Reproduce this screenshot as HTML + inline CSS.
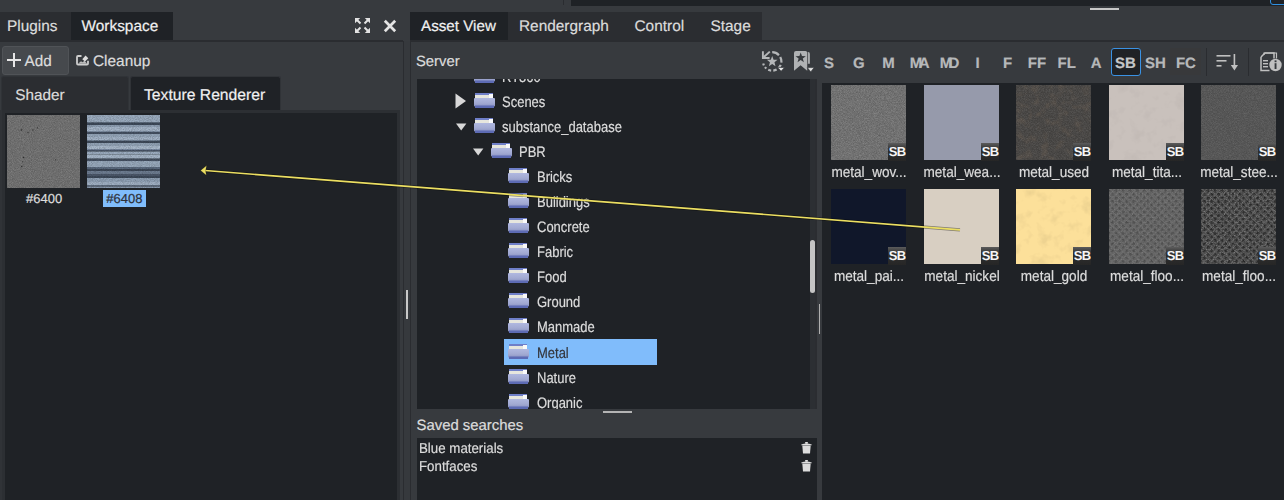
<!DOCTYPE html>
<html><head><meta charset="utf-8">
<style>
*{margin:0;padding:0;box-sizing:border-box}
html,body{width:1284px;height:500px;overflow:hidden;text-rendering:geometricPrecision;background:#373a3e;font-family:"Liberation Sans",sans-serif;color:#dcdcdc}
.a{position:absolute}
.t{position:absolute;white-space:nowrap;line-height:1;-webkit-text-stroke:0.2px currentColor}
</style></head><body>
<svg width="0" height="0" style="position:absolute">
<defs>
<linearGradient id="fg" x1="0" y1="0" x2="0" y2="1">
<stop offset="0" stop-color="#b0b8e0"/><stop offset="0.6" stop-color="#a2aad2"/><stop offset="1" stop-color="#8c94c4"/>
</linearGradient>
<symbol id="folder" viewBox="0 0 21 15">
<rect x="1" y="0" width="18" height="2.2" fill="#6f7fc8"/>
<rect x="1" y="2" width="18" height="3.5" fill="#e6e6de"/>
<rect x="15" y="1" width="4" height="4.5" fill="#fafafa"/>
<rect x="0" y="5" width="21" height="8.5" rx="1" fill="url(#fg)"/>
<rect x="1" y="12.5" width="19" height="2.5" fill="#5d6bb4"/>
</symbol>
</defs></svg>

<div class="a" style="left:563px;top:0px;width:1px;height:5px;background:#2a2c30;"></div>
<div class="a" style="left:571px;top:0px;width:713px;height:5.5px;background:#1f2226;"></div>
<div class="a" style="left:1270px;top:-4px;width:24px;height:8.5px;border:1.6px solid #2f8fe0;border-radius:3px"></div>
<div class="a" style="left:1090px;top:8px;width:29px;height:2px;background:#c8c8c8;"></div>
<div class="a" style="left:0px;top:12px;width:71px;height:28px;background:#2b2d31;"></div>
<div class="t" style="left:7.00px;top:19.00px;font-size:15.40px;color:#dcdcdc;">Plugins</div>
<div class="a" style="left:71px;top:12px;width:102px;height:28px;background:#1f2226;"></div>
<div class="t" style="left:81.50px;top:19.00px;font-size:15.40px;color:#f0f0f0;">Workspace</div>
<svg class="a" style="left:354px;top:17px" width="17" height="17" viewBox="0 0 17 17">
<g stroke="#e2e2e2" stroke-width="2" fill="none"><path d="M2.5 2.5 L6.5 6.5 M14.5 2.5 L10.5 6.5 M2.5 14.5 L6.5 10.5 M14.5 14.5 L10.5 10.5"/></g>
<g fill="#e2e2e2"><path d="M1 1 H6.2 L1 6.2Z M16 1 H10.8 L16 6.2Z M1 16 H6.2 L1 10.8Z M16 16 H10.8 L16 10.8Z"/></g>
</svg>
<svg class="a" style="left:383px;top:19px" width="14" height="14" viewBox="0 0 14 14">
<path d="M1.8 1.8 L12.2 12.2 M12.2 1.8 L1.8 12.2" stroke="#e4e4e4" stroke-width="2.7"/></svg>
<div class="a" style="left:0px;top:40px;width:403px;height:2px;background:#2a2c30;"></div>
<div class="a" style="left:403px;top:41px;width:1px;height:459px;background:#2a2c30;"></div>
<div class="a" style="left:404px;top:41px;width:6px;height:459px;background:#36393d;"></div>
<div class="a" style="left:410px;top:41px;width:1px;height:459px;background:#2a2c30;"></div>
<div class="a" style="left:1.5px;top:46px;width:67px;height:28.5px;background:#46494d;border:1px solid #505357;border-radius:3px"></div>
<div class="a" style="left:7px;top:59px;width:14px;height:2px;background:#e6e6e6;"></div>
<div class="a" style="left:13px;top:53px;width:2px;height:14px;background:#e6e6e6;"></div>
<div class="t" style="left:24.50px;top:54.00px;font-size:15.30px;color:#dcdcdc;">Add</div>
<svg class="a" style="left:75px;top:54px" width="15" height="12" viewBox="0 0 15 12">
<path d="M6.5 2 H3 Q2 2 2 3 V9.6 Q2 10.6 3 10.6 H12 Q13 10.6 13 9.6 V6.8" fill="none" stroke="#cdcdcd" stroke-width="1.8"/>
<path d="M3 9.8 L6 7.2 L7.5 8.2 L9.5 6.8 L12.2 9.8Z" fill="#bdbdbd"/>
<path d="M7.3 5.2 L10.6 1.6 L13.3 4.3 L10 7.6Z" fill="#dedede"/>
</svg>
<div class="t" style="left:93.00px;top:54.00px;font-size:15.40px;color:#dcdcdc;">Cleanup</div>
<div class="a" style="left:1px;top:76px;width:128px;height:35px;background:#2b2d31;border:1px solid #303337;border-bottom:none;border-radius:3px 3px 0 0"></div>
<div class="t" style="left:15.30px;top:88.00px;font-size:15.30px;color:#dcdcdc;">Shader</div>
<div class="a" style="left:130px;top:76px;width:151px;height:36px;background:#1f2226;border:1px solid #303337;border-bottom:none;border-radius:3px 3px 0 0"></div>
<div class="t" style="left:144.00px;top:88.00px;font-size:15.70px;color:#f0f0f0;">Texture Renderer</div>
<div class="a" style="left:0px;top:110px;width:400px;height:390px;background:#1f2226;border:3px solid #2c2f33;border-left-width:5px;border-bottom:none"></div>
<div class="a" style="left:0px;top:110px;width:2px;height:390px;background:#303337;"></div>
<svg class="a" style="left:7px;top:115px" width="73" height="73">
<defs><filter id="n1" x="0" y="0" width="100%" height="100%"><feTurbulence type="fractalNoise" baseFrequency="1.1" numOctaves="2" seed="5"/>
<feColorMatrix type="matrix" values="0 0 0 0 0  0 0 0 0 0  0 0 0 0 0  -1.5 0 0 0 1.0"/></filter>
<filter id="n1b" x="0" y="0" width="100%" height="100%"><feTurbulence type="fractalNoise" baseFrequency="1.1" numOctaves="2" seed="9"/>
<feColorMatrix type="matrix" values="0 0 0 0 1  0 0 0 0 1  0 0 0 0 1  1.5 0 0 0 -0.5"/></filter></defs>
<rect width="73" height="73" fill="#6c6c6c"/><rect width="73" height="73" filter="url(#n1)" opacity="0.18"/><rect width="73" height="73" filter="url(#n1b)" opacity="0.18"/>
<g fill="#2e2e2e"><circle cx="14.4" cy="15" r="0.8"/><circle cx="21" cy="17.6" r="0.7"/><circle cx="25.9" cy="15" r="0.7"/><circle cx="30.4" cy="12.8" r="0.6"/><circle cx="16.6" cy="42.4" r="0.7"/><circle cx="14.7" cy="51.5" r="0.7"/><circle cx="48.6" cy="44.8" r="0.6"/><circle cx="15.5" cy="46.7" r="0.5"/></g>
</svg>
<svg class="a" style="left:87px;top:115px" width="73" height="73"><rect y="0" width="73" height="7" fill="#9aabbe"/><rect y="7" width="73" height="1" fill="#5d6b7c"/><rect y="8" width="73" height="2" fill="#3e4a5a"/><rect y="10" width="73" height="2" fill="#8e9fb3"/><rect y="12" width="73" height="4" fill="#a4b4c7"/><rect y="16" width="73" height="1" fill="#7d8da1"/><rect y="17" width="73" height="2" fill="#455162"/><rect y="19" width="73" height="3" fill="#95a6b9"/><rect y="22" width="73" height="3" fill="#a2b2c5"/><rect y="25" width="73" height="1" fill="#707f92"/><rect y="26" width="73" height="2" fill="#3f4b5b"/><rect y="28" width="73" height="3" fill="#92a3b6"/><rect y="31" width="73" height="3" fill="#a8b8ca"/><rect y="34" width="73" height="1" fill="#7888a0"/><rect y="35" width="73" height="1.5" fill="#4a5668"/><rect y="36.5" width="73" height="3" fill="#9cadc0"/><rect y="39.5" width="73" height="4" fill="#a6b6c8"/><rect y="43.5" width="73" height="1" fill="#6f7e92"/><rect y="44.5" width="73" height="1.5" fill="#465264"/><rect y="46" width="73" height="6" fill="#98a9bc"/><rect y="52" width="73" height="2" fill="#5b6a7e"/><rect y="54" width="73" height="2" fill="#3d4858"/><rect y="56" width="73" height="3" fill="#6d7c90"/><rect y="59" width="73" height="2" fill="#4c586a"/><rect y="61" width="73" height="2" fill="#3e4a5a"/><rect y="63" width="73" height="4" fill="#8fa0b4"/><rect y="67" width="73" height="3" fill="#a0b0c3"/><rect y="70" width="73" height="1.5" fill="#5e6c7e"/><rect y="71.5" width="73" height="1.5" fill="#8898ac"/><rect width="73" height="73" filter="url(#n1)" opacity="0.25"/></svg>
<div class="t" style="left:26.00px;top:192.00px;font-size:13.00px;color:#dcdcdc;">#6400</div>
<div class="a" style="left:103px;top:190px;width:43px;height:17px;background:#80bdfb;"></div>
<div class="t" style="left:106.30px;top:192.00px;font-size:13.00px;color:#2e3138;">#6408</div>
<div class="a" style="left:406px;top:290px;width:2px;height:29px;background:#c8c8c8;"></div>
<div class="a" style="left:410px;top:12px;width:98px;height:28px;background:#1f2226;"></div>
<div class="t" style="left:421.00px;top:19.00px;font-size:15.20px;color:#f0f0f0;">Asset View</div>
<div class="a" style="left:508px;top:12px;width:254px;height:28px;background:#2b2d31;"></div>
<div class="t" style="left:519.00px;top:19.00px;font-size:15.40px;color:#dcdcdc;">Rendergraph</div>
<div class="t" style="left:634.50px;top:19.00px;font-size:15.40px;color:#dcdcdc;">Control</div>
<div class="t" style="left:710.50px;top:19.00px;font-size:15.40px;color:#dcdcdc;">Stage</div>
<div class="a" style="left:410px;top:40px;width:874px;height:2px;background:#2a2c30;"></div>
<div class="t" style="left:416.00px;top:55.00px;font-size:14.80px;color:#dcdcdc;">Server</div>
<svg class="a" style="left:759px;top:48px" width="27" height="26" viewBox="0 0 27 26">
<path d="M13.2 4.2 A9.2 9.2 0 1 1 4 13.4" fill="none" stroke="#b4b6b8" stroke-width="2.2" stroke-dasharray="7.5 2.2 6 2.2 4 2.2 3.5 2.2 3 2.2 2 2 2 3"/>
<path d="M3.9 3.3 V10 H10.6" fill="none" stroke="#b4b6b8" stroke-width="1.9"/>
<path d="M4.6 9.3 L10.8 3.6" stroke="#b4b6b8" stroke-width="1.9"/>
<path d="M13.20 8.00 L14.61 11.66 L18.53 11.87 L15.48 14.34 L16.49 18.13 L13.20 16.00 L9.91 18.13 L10.92 14.34 L7.87 11.87 L11.79 11.66Z" fill="#b4b6b8"/>
<path d="M18.6 19.4 H25.6 L22.1 23.3Z" fill="#e2e2e2" stroke="#373a3e" stroke-width="0.7"/>
</svg>
<svg class="a" style="left:791px;top:48px" width="28" height="27" viewBox="0 0 28 27">
<path d="M3 5 Q3 3 5 3 H14.5 Q16.2 3 16.2 5 V22.7 L9.6 17.3 L3 22.7Z" fill="#b0b2b4"/>
<path d="M16.6 4 H17.2 Q18.9 4 18.9 6 V15.7 H16.6Z" fill="#a8aaac"/>
<rect x="16.2" y="4.5" width="0.7" height="11" fill="#55575a"/>
<path d="M9.70 4.40 L10.99 8.02 L14.84 8.13 L11.79 10.48 L12.87 14.17 L9.70 12.00 L6.53 14.17 L7.61 10.48 L4.56 8.13 L8.41 8.02Z" fill="#373a3e"/>
<path d="M16.3 19.6 H23.2 L19.75 23.9Z" fill="#e2e2e2" stroke="#373a3e" stroke-width="0.7"/>
</svg>
<div class="a" style="left:417px;top:78.5px;width:393px;height:330px;background:#1f2226;overflow:hidden">
<svg class="a" style="left:57.0px;top:-10.5px" width="21" height="15"><use href="#folder"/></svg>
<div class="t" style="left:85.00px;top:-8.50px;font-size:15.20px;color:#dcdcdc;transform:scaleX(0.855);transform-origin:0 0">RT360</div>
<svg class="a" style="left:38.0px;top:14.5px" width="12" height="16"><path d="M0.5 0.5 L11 8 L0.5 15.5Z" fill="#d8d8d8"/></svg>
<svg class="a" style="left:57.0px;top:14.5px" width="21" height="15"><use href="#folder"/></svg>
<div class="t" style="left:85.00px;top:16.50px;font-size:15.20px;color:#dcdcdc;transform:scaleX(0.855);transform-origin:0 0">Scenes</div>
<svg class="a" style="left:38.0px;top:44.1px" width="13" height="10"><path d="M1 0.6 L11.4 0.6 L6.2 7.6Z" fill="#d8d8d8"/></svg>
<svg class="a" style="left:57.0px;top:39.5px" width="21" height="15"><use href="#folder"/></svg>
<div class="t" style="left:85.00px;top:41.50px;font-size:15.20px;color:#dcdcdc;transform:scaleX(0.855);transform-origin:0 0">substance_database</div>
<svg class="a" style="left:55.0px;top:69.1px" width="13" height="10"><path d="M1 0.6 L11.4 0.6 L6.2 7.6Z" fill="#d8d8d8"/></svg>
<svg class="a" style="left:74.0px;top:64.5px" width="21" height="15"><use href="#folder"/></svg>
<div class="t" style="left:102.20px;top:66.50px;font-size:15.20px;color:#dcdcdc;transform:scaleX(0.855);transform-origin:0 0">PBR</div>
<svg class="a" style="left:91.0px;top:89.5px" width="21" height="15"><use href="#folder"/></svg>
<div class="t" style="left:119.80px;top:91.50px;font-size:15.20px;color:#dcdcdc;transform:scaleX(0.855);transform-origin:0 0">Bricks</div>
<svg class="a" style="left:91.0px;top:114.5px" width="21" height="15"><use href="#folder"/></svg>
<div class="t" style="left:119.80px;top:116.50px;font-size:15.20px;color:#dcdcdc;transform:scaleX(0.855);transform-origin:0 0">Buildings</div>
<svg class="a" style="left:91.0px;top:139.5px" width="21" height="15"><use href="#folder"/></svg>
<div class="t" style="left:119.80px;top:141.50px;font-size:15.20px;color:#dcdcdc;transform:scaleX(0.855);transform-origin:0 0">Concrete</div>
<svg class="a" style="left:91.0px;top:164.5px" width="21" height="15"><use href="#folder"/></svg>
<div class="t" style="left:119.80px;top:166.50px;font-size:15.20px;color:#dcdcdc;transform:scaleX(0.855);transform-origin:0 0">Fabric</div>
<svg class="a" style="left:91.0px;top:189.5px" width="21" height="15"><use href="#folder"/></svg>
<div class="t" style="left:119.80px;top:191.50px;font-size:15.20px;color:#dcdcdc;transform:scaleX(0.855);transform-origin:0 0">Food</div>
<svg class="a" style="left:91.0px;top:214.5px" width="21" height="15"><use href="#folder"/></svg>
<div class="t" style="left:119.80px;top:216.50px;font-size:15.20px;color:#dcdcdc;transform:scaleX(0.855);transform-origin:0 0">Ground</div>
<svg class="a" style="left:91.0px;top:239.5px" width="21" height="15"><use href="#folder"/></svg>
<div class="t" style="left:119.80px;top:241.50px;font-size:15.20px;color:#dcdcdc;transform:scaleX(0.855);transform-origin:0 0">Manmade</div>
<div class="a" style="left:87px;top:260.8px;width:153px;height:25.5px;background:#80bcfb;"></div>
<svg class="a" style="left:91.0px;top:265.0px" width="21" height="15"><use href="#folder"/></svg>
<div class="t" style="left:119.80px;top:267.50px;font-size:15.20px;color:#34373e;transform:scaleX(0.855);transform-origin:0 0">Metal</div>
<svg class="a" style="left:91.0px;top:290.0px" width="21" height="15"><use href="#folder"/></svg>
<div class="t" style="left:119.80px;top:292.50px;font-size:15.20px;color:#dcdcdc;transform:scaleX(0.855);transform-origin:0 0">Nature</div>
<svg class="a" style="left:91.0px;top:315.0px" width="21" height="15"><use href="#folder"/></svg>
<div class="t" style="left:119.80px;top:317.50px;font-size:15.20px;color:#dcdcdc;transform:scaleX(0.855);transform-origin:0 0">Organic</div>
</div>
<div class="a" style="left:809.5px;top:78.5px;width:5.5px;height:330px;background:#2c2f33;"></div>
<div class="a" style="left:809.5px;top:240px;width:5.8px;height:53px;background:#c4c4c4;border-radius:3px"></div>
<div class="a" style="left:815px;top:78.5px;width:2px;height:330px;background:#2b2d31;"></div>
<div class="a" style="left:603px;top:411px;width:29px;height:2px;background:#b4b4b4;"></div>
<div class="t" style="left:416.50px;top:419.00px;font-size:14.90px;color:#dcdcdc;">Saved searches</div>
<div class="a" style="left:417px;top:437.5px;width:399.5px;height:62.5px;background:#1f2226;"></div>
<div class="t" style="left:419.00px;top:442.00px;font-size:14.30px;color:#dcdcdc;transform:scaleX(0.930);transform-origin:0 0;">Blue materials</div>
<div class="t" style="left:419.00px;top:460.00px;font-size:14.30px;color:#dcdcdc;transform:scaleX(0.930);transform-origin:0 0;">Fontfaces</div>
<svg class="a" style="left:800.5px;top:441.5px" width="11" height="13" viewBox="0 0 11 13">
<path d="M0.3 2.6 Q5.5 0.6 10.7 2.6 V3.3 H0.3Z" fill="#e0e0e0"/><rect x="4" y="0" width="3" height="1.8" rx="0.8" fill="#e0e0e0"/>
<path d="M1.3 3.6 H9.7 L9 11.5 H2Z" fill="#dcdcdc"/></svg>
<svg class="a" style="left:800.5px;top:459.6px" width="11" height="13" viewBox="0 0 11 13">
<path d="M0.3 2.6 Q5.5 0.6 10.7 2.6 V3.3 H0.3Z" fill="#e0e0e0"/><rect x="4" y="0" width="3" height="1.8" rx="0.8" fill="#e0e0e0"/>
<path d="M1.3 3.6 H9.7 L9 11.5 H2Z" fill="#dcdcdc"/></svg>
<div class="a" style="left:818.5px;top:304px;width:1.2px;height:30px;background:#b0b0b0;"></div>
<div class="a" style="left:1170px;top:48px;width:31px;height:27px;background:#38393b;"></div>
<div class="a" style="left:1111px;top:48px;width:29.5px;height:27.5px;background:#1f2226;border:1.6px solid #3a92e4;border-radius:3px"></div>
<div class="t" style="left:799.0px;top:56.00px;width:60px;text-align:center;font-weight:bold;font-size:15px;color:#b6b8ba;">S</div>
<div class="t" style="left:828.8px;top:56.00px;width:60px;text-align:center;font-weight:bold;font-size:15px;color:#b6b8ba;">G</div>
<div class="t" style="left:858.4px;top:56.00px;width:60px;text-align:center;font-weight:bold;font-size:15px;color:#b6b8ba;">M</div>
<div class="t" style="left:887.9px;top:56.00px;width:60px;text-align:center;font-weight:bold;font-size:15px;color:#b6b8ba;letter-spacing:-3.5px;">MA</div>
<div class="t" style="left:917.8px;top:56.00px;width:60px;text-align:center;font-weight:bold;font-size:15px;color:#b6b8ba;letter-spacing:-3.5px;">MD</div>
<div class="t" style="left:947.6px;top:56.00px;width:60px;text-align:center;font-weight:bold;font-size:15px;color:#b6b8ba;">I</div>
<div class="t" style="left:977.6px;top:56.00px;width:60px;text-align:center;font-weight:bold;font-size:15px;color:#b6b8ba;">F</div>
<div class="t" style="left:1007.0px;top:56.00px;width:60px;text-align:center;font-weight:bold;font-size:15px;color:#b6b8ba;">FF</div>
<div class="t" style="left:1036.7px;top:56.00px;width:60px;text-align:center;font-weight:bold;font-size:15px;color:#b6b8ba;">FL</div>
<div class="t" style="left:1066.2px;top:56.00px;width:60px;text-align:center;font-weight:bold;font-size:15px;color:#b6b8ba;">A</div>
<div class="t" style="left:1095.5px;top:56.00px;width:60px;text-align:center;font-weight:bold;font-size:15px;color:#c4c6c8;">SB</div>
<div class="t" style="left:1125.4px;top:56.00px;width:60px;text-align:center;font-weight:bold;font-size:15px;color:#b6b8ba;">SH</div>
<div class="t" style="left:1155.9px;top:56.00px;width:60px;text-align:center;font-weight:bold;font-size:15px;color:#b6b8ba;">FC</div>
<div class="a" style="left:1206px;top:48px;width:1px;height:28px;background:#2a2c30;"></div>
<div class="a" style="left:1248px;top:48px;width:1px;height:28px;background:#2a2c30;"></div>
<svg class="a" style="left:1216px;top:54px" width="22" height="17" viewBox="0 0 22 17">
<g fill="#c0c0c0"><rect x="0.5" y="1" width="14" height="1.6"/><rect x="0.5" y="6" width="10" height="1.6"/><rect x="0.5" y="11" width="5" height="1.6"/>
<rect x="17.6" y="0" width="1.6" height="12"/><path d="M14.8 11 H22 L18.4 16.5Z"/></g></svg>
<svg class="a" style="left:1260px;top:52px" width="22" height="20" viewBox="0 0 22 20">
<path d="M1 5 L5 1 H14 V6.5" fill="none" stroke="#c0c0c0" stroke-width="1.5"/>
<path d="M1 5 V18.5 H9.5" fill="none" stroke="#c0c0c0" stroke-width="1.5"/>
<path d="M4 3 V1 H16.5 V6.5" fill="none" stroke="#c0c0c0" stroke-width="1.2"/>
<g fill="#c0c0c0"><rect x="3" y="8" width="5" height="1.4"/><rect x="3" y="11" width="5" height="1.4"/><rect x="3" y="14" width="5" height="1.4"/></g>
<circle cx="15.5" cy="13" r="6.2" fill="#c0c0c0"/>
<rect x="14.6" y="11.2" width="1.9" height="5.8" fill="#373a3e"/><rect x="14.6" y="8.4" width="1.9" height="1.8" fill="#373a3e"/>
</svg>
<div class="a" style="left:822px;top:82.6px;width:462px;height:417.4px;background:#1f2226;"></div>
<svg width="0" height="0" style="position:absolute"><defs>
<filter id="nz1" x="0" y="0" width="100%" height="100%"><feTurbulence type="fractalNoise" baseFrequency="1.4" numOctaves="1" seed="2"/><feColorMatrix type="matrix" values="0 0 0 0 0  0 0 0 0 0  0 0 0 0 0  -1.6 0 0 0 1.05"/></filter>
<filter id="nz2" x="0" y="0" width="100%" height="100%"><feTurbulence type="fractalNoise" baseFrequency="1.4" numOctaves="1" seed="7"/><feColorMatrix type="matrix" values="0 0 0 0 1  0 0 0 0 1  0 0 0 0 1  1.6 0 0 0 -0.6"/></filter>
<filter id="blot" x="0" y="0" width="100%" height="100%"><feTurbulence type="fractalNoise" baseFrequency="0.09" numOctaves="3" seed="11"/><feColorMatrix type="matrix" values="0 0 0 0 0  0 0 0 0 0  0 0 0 0 0  -3 0 0 0 1.55"/></filter>
<filter id="rust" x="0" y="0" width="100%" height="100%"><feTurbulence type="fractalNoise" baseFrequency="0.12" numOctaves="3" seed="4"/><feColorMatrix type="matrix" values="0 0 0 0 0.45  0 0 0 0 0.28  0 0 0 0 0.16  -3.5 0 0 0 1.75"/></filter>
<pattern id="dia" width="5" height="5" patternUnits="userSpaceOnUse" patternTransform="rotate(45)"><rect width="5" height="5" fill="#000" fill-opacity="0"/><rect width="2.5" height="2.5" fill="#000" fill-opacity="0.22"/></pattern>
<pattern id="dia2" width="5" height="5" patternUnits="userSpaceOnUse" patternTransform="rotate(45)"><rect width="2.6" height="2.6" fill="#000" fill-opacity="0.45"/></pattern>
<linearGradient id="badge" x1="0" y1="0" x2="0" y2="1"><stop offset="0" stop-color="#5c5c5c"/><stop offset="0.35" stop-color="#303030"/><stop offset="1" stop-color="#262626"/></linearGradient>
</defs></svg>
<svg class="a" style="left:831px;top:85px" width="75" height="75"><rect width="75" height="75" fill="#717171"/><rect width="75" height="75" filter="url(#nz1)" opacity="0.22"/><rect width="75" height="75" filter="url(#nz2)" opacity="0.22"/></svg>
<svg class="a" style="left:888px;top:143px" width="18" height="18" viewBox="0 0 18 18">
<rect width="18" height="18" fill="url(#badge)"/>
<text x="9.2" y="13.4" text-anchor="middle" font-family="Liberation Sans" font-weight="bold" font-size="13" fill="#f6f6f6" letter-spacing="-0.7">SB</text></svg>
<div class="t" style="left:809.0px;top:165.00px;width:120px;text-align:center;font-size:15px;transform:scaleX(0.905);transform-origin:60px 0">metal_wov...</div>
<svg class="a" style="left:924px;top:85px" width="75" height="75"><rect width="75" height="75" fill="#969aab"/></svg>
<svg class="a" style="left:981px;top:143px" width="18" height="18" viewBox="0 0 18 18">
<rect width="18" height="18" fill="url(#badge)"/>
<text x="9.2" y="13.4" text-anchor="middle" font-family="Liberation Sans" font-weight="bold" font-size="13" fill="#f6f6f6" letter-spacing="-0.7">SB</text></svg>
<div class="t" style="left:902.0px;top:165.00px;width:120px;text-align:center;font-size:15px;transform:scaleX(0.905);transform-origin:60px 0">metal_wea...</div>
<svg class="a" style="left:1016px;top:85px" width="75" height="75"><rect width="75" height="75" fill="#474543"/><rect width="75" height="75" filter="url(#nz1)" opacity="0.15"/><rect width="75" height="75" filter="url(#nz2)" opacity="0.15"/><rect width="75" height="75" filter="url(#rust)" opacity="0.12"/></svg>
<svg class="a" style="left:1073px;top:143px" width="18" height="18" viewBox="0 0 18 18">
<rect width="18" height="18" fill="url(#badge)"/>
<text x="9.2" y="13.4" text-anchor="middle" font-family="Liberation Sans" font-weight="bold" font-size="13" fill="#f6f6f6" letter-spacing="-0.7">SB</text></svg>
<div class="t" style="left:994.0px;top:165.00px;width:120px;text-align:center;font-size:15px;transform:scaleX(0.905);transform-origin:60px 0">metal_used</div>
<svg class="a" style="left:1109px;top:85px" width="75" height="75"><rect width="75" height="75" fill="#c9c1bc"/><rect width="75" height="75" filter="url(#blot)" opacity="0.025"/></svg>
<svg class="a" style="left:1166px;top:143px" width="18" height="18" viewBox="0 0 18 18">
<rect width="18" height="18" fill="url(#badge)"/>
<text x="9.2" y="13.4" text-anchor="middle" font-family="Liberation Sans" font-weight="bold" font-size="13" fill="#f6f6f6" letter-spacing="-0.7">SB</text></svg>
<div class="t" style="left:1087.0px;top:165.00px;width:120px;text-align:center;font-size:15px;transform:scaleX(0.905);transform-origin:60px 0">metal_tita...</div>
<svg class="a" style="left:1201px;top:85px" width="75" height="75"><rect width="75" height="75" fill="#555555"/><rect width="75" height="75" filter="url(#nz1)" opacity="0.15"/><rect width="75" height="75" filter="url(#nz2)" opacity="0.15"/></svg>
<svg class="a" style="left:1258px;top:143px" width="18" height="18" viewBox="0 0 18 18">
<rect width="18" height="18" fill="url(#badge)"/>
<text x="9.2" y="13.4" text-anchor="middle" font-family="Liberation Sans" font-weight="bold" font-size="13" fill="#f6f6f6" letter-spacing="-0.7">SB</text></svg>
<div class="t" style="left:1179.0px;top:165.00px;width:120px;text-align:center;font-size:15px;transform:scaleX(0.905);transform-origin:60px 0">metal_stee...</div>
<svg class="a" style="left:831px;top:189px" width="75" height="75"><rect width="75" height="75" fill="#10172a"/></svg>
<svg class="a" style="left:888px;top:247px" width="18" height="18" viewBox="0 0 18 18">
<rect width="18" height="18" fill="url(#badge)"/>
<text x="9.2" y="13.4" text-anchor="middle" font-family="Liberation Sans" font-weight="bold" font-size="13" fill="#f6f6f6" letter-spacing="-0.7">SB</text></svg>
<div class="t" style="left:809.0px;top:269.00px;width:120px;text-align:center;font-size:15px;transform:scaleX(0.905);transform-origin:60px 0">metal_pai...</div>
<svg class="a" style="left:924px;top:189px" width="75" height="75"><rect width="75" height="75" fill="#d8cfc2"/></svg>
<svg class="a" style="left:981px;top:247px" width="18" height="18" viewBox="0 0 18 18">
<rect width="18" height="18" fill="url(#badge)"/>
<text x="9.2" y="13.4" text-anchor="middle" font-family="Liberation Sans" font-weight="bold" font-size="13" fill="#f6f6f6" letter-spacing="-0.7">SB</text></svg>
<div class="t" style="left:902.0px;top:269.00px;width:120px;text-align:center;font-size:15px;transform:scaleX(0.905);transform-origin:60px 0">metal_nickel</div>
<svg class="a" style="left:1016px;top:189px" width="75" height="75"><rect width="75" height="75" fill="#fce09a"/><rect width="75" height="75" filter="url(#blot)" opacity="0.05"/></svg>
<svg class="a" style="left:1073px;top:247px" width="18" height="18" viewBox="0 0 18 18">
<rect width="18" height="18" fill="url(#badge)"/>
<text x="9.2" y="13.4" text-anchor="middle" font-family="Liberation Sans" font-weight="bold" font-size="13" fill="#f6f6f6" letter-spacing="-0.7">SB</text></svg>
<div class="t" style="left:994.0px;top:269.00px;width:120px;text-align:center;font-size:15px;transform:scaleX(0.905);transform-origin:60px 0">metal_gold</div>
<svg class="a" style="left:1109px;top:189px" width="75" height="75"><rect width="75" height="75" fill="#686868"/><rect width="75" height="75" filter="url(#nz1)" opacity="0.18"/><rect width="75" height="75" filter="url(#nz2)" opacity="0.18"/><rect width="75" height="75" fill="url(#dia)"/></svg>
<svg class="a" style="left:1166px;top:247px" width="18" height="18" viewBox="0 0 18 18">
<rect width="18" height="18" fill="url(#badge)"/>
<text x="9.2" y="13.4" text-anchor="middle" font-family="Liberation Sans" font-weight="bold" font-size="13" fill="#f6f6f6" letter-spacing="-0.7">SB</text></svg>
<div class="t" style="left:1087.0px;top:269.00px;width:120px;text-align:center;font-size:15px;transform:scaleX(0.905);transform-origin:60px 0">metal_floo...</div>
<svg class="a" style="left:1201px;top:189px" width="75" height="75"><rect width="75" height="75" fill="#505050"/><rect width="75" height="75" filter="url(#nz1)" opacity="0.40"/><rect width="75" height="75" filter="url(#nz2)" opacity="0.40"/><rect width="75" height="75" fill="url(#dia2)"/></svg>
<svg class="a" style="left:1258px;top:247px" width="18" height="18" viewBox="0 0 18 18">
<rect width="18" height="18" fill="url(#badge)"/>
<text x="9.2" y="13.4" text-anchor="middle" font-family="Liberation Sans" font-weight="bold" font-size="13" fill="#f6f6f6" letter-spacing="-0.7">SB</text></svg>
<div class="t" style="left:1179.0px;top:269.00px;width:120px;text-align:center;font-size:15px;transform:scaleX(0.905);transform-origin:60px 0">metal_floo...</div>
<svg class="a" style="left:0;top:0" width="1284" height="500">
<line x1="205" y1="170.5" x2="960" y2="229.8" stroke="#000" stroke-opacity="0.4" stroke-width="3.2"/>
<line x1="205" y1="170.5" x2="960" y2="229.8" stroke="#ecdf62" stroke-width="1.7"/>
<path d="M200.6 170.4 L206.6 165.6 L205.6 170.8 L206.3 175.3 Z" fill="#ecdf62" stroke="#000" stroke-opacity="0.3" stroke-width="0.7"/>
</svg>
</body></html>
